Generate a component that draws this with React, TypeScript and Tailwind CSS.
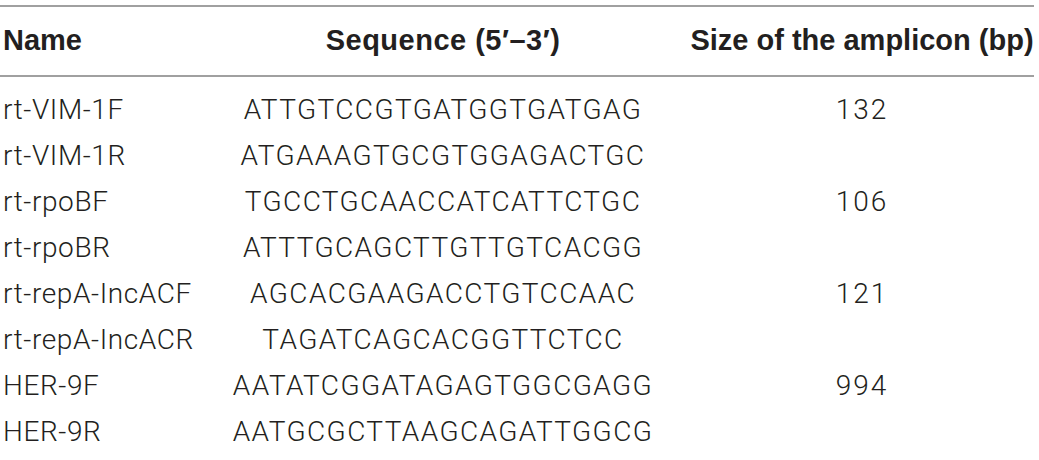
const rows = [
  { name: 'rt-VIM-1F', seq: 'ATTGTCCGTGATGGTGATGAG', size: '132' },
  { name: 'rt-VIM-1R', seq: 'ATGAAAGTGCGTGGAGACTGC', size: '' },
  { name: 'rt-rpoBF', seq: 'TGCCTGCAACCATCATTCTGC', size: '106' },
  { name: 'rt-rpoBR', seq: 'ATTTGCAGCTTGTTGTCACGG', size: '' },
  { name: 'rt-repA-IncACF', seq: 'AGCACGAAGACCTGTCCAAC', size: '121' },
  { name: 'rt-repA-IncACR', seq: 'TAGATCAGCACGGTTCTCC', size: '' },
  { name: 'HER-9F', seq: 'AATATCGGATAGAGTGGCGAGG', size: '994' },
  { name: 'HER-9R', seq: 'AATGCGCTTAAGCAGATTGGCG', size: '' },
]

export default function App() {
  return (
    <div className="w-[1039px] h-[460px] bg-white text-[#231f20] pt-[5px]">
      <div className="w-[1034px]">
        {/* header */}
        <div className="grid grid-cols-[196px_494px_344px] h-[72px] items-center border-y-2 border-[#a0a0a0] font-['Liberation_Sans',Arial,sans-serif] font-bold text-[29px]">
          <div className="pl-[3px]">Name</div>
          <div className="text-center tracking-[0.5px]">Sequence (5′–3′)</div>
          <div className="text-center whitespace-nowrap">Size of the amplicon (bp)</div>
        </div>

        {/* body */}
        <div className="pt-[10px] font-['Roboto','Liberation_Sans',sans-serif] font-light text-[28px]">
          {rows.map((r) => (
            <div key={r.name} className="grid grid-cols-[196px_494px_344px] h-[46px] items-center">
              <div className="pl-[3px] whitespace-nowrap tracking-[0.6px]">{r.name}</div>
              <div className="text-center tracking-[1.4px]">{r.seq}</div>
              <div className="text-center tracking-[2px]">{r.size}</div>
            </div>
          ))}
        </div>
      </div>
    </div>
  )
}
